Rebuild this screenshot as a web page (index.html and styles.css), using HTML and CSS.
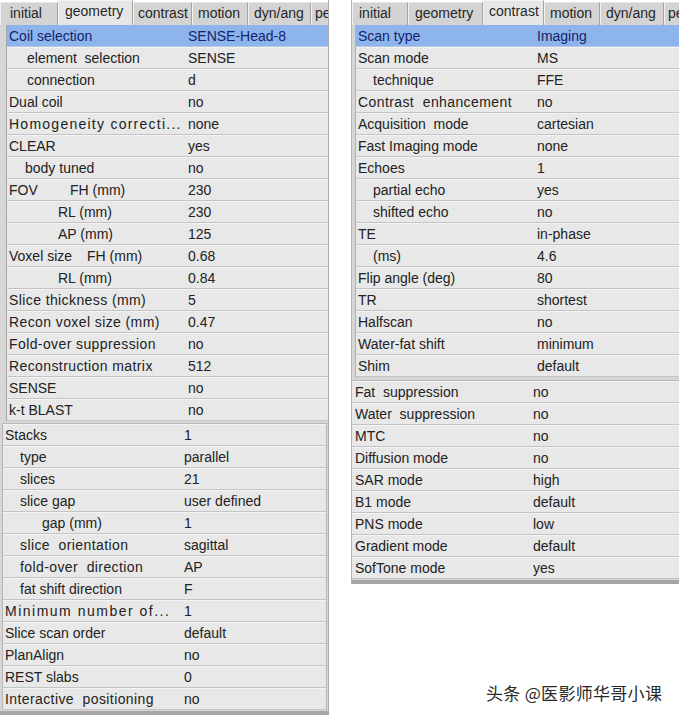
FILE: index.html
```html
<!DOCTYPE html>
<html>
<head>
<meta charset="utf-8">
<link rel="stylesheet" href="styles.css">
</head>
<body>
<div class="page">
  <section class="panel panel-left">
    <div class="tabs">
      <span class="tab t-initial">initial</span>
      <span class="tab t-geometry active">geometry</span>
      <span class="tab t-contrast">contrast</span>
      <span class="tab t-motion">motion</span>
      <span class="tab t-dyn">dyn/ang</span>
      <span class="tab t-post">pe</span>
    </div>
    <div class="group g1">
      <div class="row sel"><span class="lbl">Coil selection</span><span class="val">SENSE-Head-8</span></div>
      <div class="row"><span class="lbl i1">element&nbsp; selection</span><span class="val">SENSE</span></div>
      <div class="row"><span class="lbl i1">connection</span><span class="val">d</span></div>
      <div class="row"><span class="lbl">Dual coil</span><span class="val">no</span></div>
      <div class="row"><span class="lbl w2">Homogeneity correcti...</span><span class="val">none</span></div>
      <div class="row"><span class="lbl">CLEAR</span><span class="val">yes</span></div>
      <div class="row"><span class="lbl i1b">body tuned</span><span class="val">no</span></div>
      <div class="row"><span class="lbl"><span class="lead-fov">FOV</span>FH (mm)</span><span class="val">230</span></div>
      <div class="row"><span class="lbl i3">RL (mm)</span><span class="val">230</span></div>
      <div class="row"><span class="lbl i3">AP (mm)</span><span class="val">125</span></div>
      <div class="row"><span class="lbl"><span class="lead-vox">Voxel size</span>FH (mm)</span><span class="val">0.68</span></div>
      <div class="row"><span class="lbl i3">RL (mm)</span><span class="val">0.84</span></div>
      <div class="row"><span class="lbl w1">Slice thickness (mm)</span><span class="val">5</span></div>
      <div class="row"><span class="lbl w1">Recon voxel size (mm)</span><span class="val">0.47</span></div>
      <div class="row"><span class="lbl w1">Fold-over suppression</span><span class="val">no</span></div>
      <div class="row"><span class="lbl w1">Reconstruction matrix</span><span class="val">512</span></div>
      <div class="row"><span class="lbl">SENSE</span><span class="val">no</span></div>
      <div class="row"><span class="lbl">k-t BLAST</span><span class="val">no</span></div>
    </div>
    <div class="group g2">
      <div class="row"><span class="lbl">Stacks</span><span class="val">1</span></div>
      <div class="row"><span class="lbl i1">type</span><span class="val">parallel</span></div>
      <div class="row"><span class="lbl i1">slices</span><span class="val">21</span></div>
      <div class="row"><span class="lbl i1">slice gap</span><span class="val">user defined</span></div>
      <div class="row"><span class="lbl i2">gap (mm)</span><span class="val">1</span></div>
      <div class="row"><span class="lbl i1 w1">slice&nbsp; orientation</span><span class="val">sagittal</span></div>
      <div class="row"><span class="lbl i1 w1">fold-over&nbsp; direction</span><span class="val">AP</span></div>
      <div class="row"><span class="lbl i1">fat shift direction</span><span class="val">F</span></div>
      <div class="row"><span class="lbl w3">Minimum number of...</span><span class="val">1</span></div>
      <div class="row"><span class="lbl">Slice scan order</span><span class="val">default</span></div>
      <div class="row"><span class="lbl">PlanAlign</span><span class="val">no</span></div>
      <div class="row"><span class="lbl">REST slabs</span><span class="val">0</span></div>
      <div class="row"><span class="lbl w1">Interactive&nbsp; positioning</span><span class="val">no</span></div>
    </div>
  </section>

  <div class="right-col">
    <section class="panel panel-right">
      <div class="tabs">
        <span class="tab t-initial">initial</span>
        <span class="tab t-geometry">geometry</span>
        <span class="tab t-contrast active">contrast</span>
        <span class="tab t-motion">motion</span>
        <span class="tab t-dyn">dyn/ang</span>
        <span class="tab t-post">pe</span>
      </div>
      <div class="group g1">
        <div class="row sel"><span class="lbl">Scan type</span><span class="val">Imaging</span></div>
        <div class="row"><span class="lbl">Scan mode</span><span class="val">MS</span></div>
        <div class="row"><span class="lbl i1">technique</span><span class="val">FFE</span></div>
        <div class="row"><span class="lbl w1">Contrast&nbsp; enhancement</span><span class="val">no</span></div>
        <div class="row"><span class="lbl">Acquisition&nbsp; mode</span><span class="val">cartesian</span></div>
        <div class="row"><span class="lbl">Fast Imaging mode</span><span class="val">none</span></div>
        <div class="row"><span class="lbl">Echoes</span><span class="val">1</span></div>
        <div class="row"><span class="lbl i1">partial echo</span><span class="val">yes</span></div>
        <div class="row"><span class="lbl i1">shifted echo</span><span class="val">no</span></div>
        <div class="row"><span class="lbl">TE</span><span class="val">in-phase</span></div>
        <div class="row"><span class="lbl i1">(ms)</span><span class="val">4.6</span></div>
        <div class="row"><span class="lbl">Flip angle (deg)</span><span class="val">80</span></div>
        <div class="row"><span class="lbl">TR</span><span class="val">shortest</span></div>
        <div class="row"><span class="lbl">Halfscan</span><span class="val">no</span></div>
        <div class="row"><span class="lbl">Water-fat shift</span><span class="val">minimum</span></div>
        <div class="row"><span class="lbl">Shim</span><span class="val">default</span></div>
      </div>
      <div class="group g2">
        <div class="row"><span class="lbl">Fat&nbsp; suppression</span><span class="val">no</span></div>
        <div class="row"><span class="lbl">Water&nbsp; suppression</span><span class="val">no</span></div>
        <div class="row"><span class="lbl">MTC</span><span class="val">no</span></div>
        <div class="row"><span class="lbl">Diffusion mode</span><span class="val">no</span></div>
        <div class="row"><span class="lbl">SAR mode</span><span class="val">high</span></div>
        <div class="row"><span class="lbl">B1 mode</span><span class="val">default</span></div>
        <div class="row"><span class="lbl">PNS mode</span><span class="val">low</span></div>
        <div class="row"><span class="lbl">Gradient mode</span><span class="val">default</span></div>
        <div class="row"><span class="lbl">SofTone mode</span><span class="val">yes</span></div>
      </div>
    </section>
    <div class="watermark">头条 @医影师华哥小课</div>
  </div>
</div>
</body>
</html>
```

FILE: styles.css
```css
html, body {
  margin: 0;
  padding: 0;
  background: #ffffff;
}
body {
  width: 679px;
  height: 716px;
  overflow: hidden;
  font-family: "Liberation Sans", Arial, sans-serif;
  font-size: 14px;
  color: #222222;
}
.page {
  display: flex;
  gap: 22px;
  align-items: flex-start;
}

/* panels */
.panel {
  background: #d6d6d6;
  overflow: hidden;
}
.panel-left {
  width: 328px;
  flex: none;
  border-right: 1px solid #a9a9a9;
  border-bottom: 4px solid #a6a6a6;
  padding-bottom: 1px;
}
.right-col {
  flex: 1;
  min-width: 0;
  display: flex;
  flex-direction: column;
}
.panel-right {
  width: 340px;
  border-left: 1px solid #b4b4b4;
  border-bottom: 4px solid #a6a6a6;
  padding-bottom: 1px;
}

/* tabs */
.tabs {
  display: flex;
  align-items: flex-end;
  height: 25px;
  background: #ffffff;
  white-space: nowrap;
  overflow: hidden;
}
.tab {
  flex: none;
  box-sizing: border-box;
  height: 23px;
  line-height: 21px;
  padding-left: 5px;
  background: #d3d3d3;
  border-left: 1px solid #f2f2f2;
  border-right: 1px solid #a4a4a4;
  border-top: 1px solid #e8e8e8;
  color: #262626;
  font-size: 14px;
  overflow: hidden;
}
.tab.active {
  height: 25px;
  line-height: 21px;
  background: #e6e6e6;
  border-top: 1px solid #f4f4f4;
}
.t-initial { width: 58px; padding-left: 9px; }
.t-geometry { width: 75px; padding-left: 6px; }
.t-contrast { width: 59px; padding-left: 4px; }
.t-motion { width: 56px; }
.t-dyn { width: 63px; }
.t-post { flex: 1; min-width: 0; padding-left: 3px; border-right: none; }
.panel-right .t-initial { width: 56px; padding-left: 6px; }
.panel-right .t-contrast { width: 61px; padding-left: 5px; }
.panel-right .t-dyn { width: 64px; }

/* groups */
.group {
  background: #e8e8e8;
}
.panel-left .g1 {
  margin-left: 6px;
  border-left: 1px solid #a8a8a8;
}
.panel-left .g2 {
  margin-top: 2px;
  margin-left: 2px;
  margin-right: 1px;
  border: 1px solid #b8b8b8;
  border-bottom: none;
}
.panel-right .g1 {
  margin-left: 3px;
  border-left: 1px solid #b0b0b0;
}
.panel-right .g2 {
  margin-top: 3px;
  border-top: 1px solid #b8b8b8;
}

/* rows */
.row {
  display: flex;
  align-items: center;
  height: 21px;
  border-bottom: 1px solid #c4c4c4;
  box-shadow: inset 0 1px 0 #f3f3f3;
  white-space: nowrap;
}
.row.sel {
  background: #8db4ec;
  box-shadow: none;
  color: #13246a;
  border-bottom-color: #b8c8e0;
}
.lbl {
  box-sizing: border-box;
  width: 181px;
  flex: none;
  padding-left: 2px;
  overflow: hidden;
}
.val {
  flex: 1;
}
.panel-left .g2 .lbl { padding-left: 2px; }
.panel-right .g2 .lbl { padding-left: 3px; }

.lbl.i1 { padding-left: 20px; }
.lbl.i1b { padding-left: 18px; }
.lbl.i2 { padding-left: 39px; }
.lbl.i3 { padding-left: 51px; }
.panel-left .g2 .lbl.i1 { padding-left: 17px; }
.panel-left .g2 .lbl.i2 { padding-left: 39px; }
.panel-right .lbl.i1 { padding-left: 17px; }

.w1 { letter-spacing: 0.4px; }
.w2 { letter-spacing: 1.25px; }
.w3 { letter-spacing: 1.5px; }

.lead-fov {
  display: inline-block;
  width: 61px;
}
.lead-vox {
  display: inline-block;
  width: 78px;
}

/* watermark */
.watermark {
  margin-top: 96px;
  margin-left: 135px;
  font-family: "Noto Sans CJK SC", sans-serif;
  font-size: 17px;
  letter-spacing: 0.3px;
  color: #2a2a2a;
  text-shadow: 0 0 2px #ffffff, 1px 1px 0 #ffffff;
  white-space: nowrap;
}
```
